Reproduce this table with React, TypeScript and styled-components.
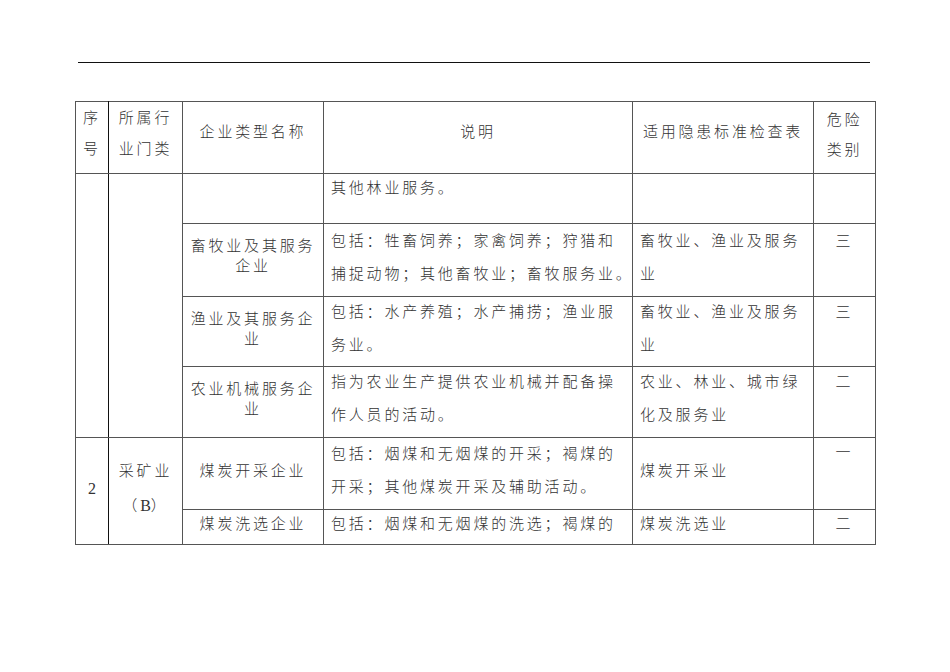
import React from 'react'
import styled, { createGlobalStyle } from 'styled-components'

const GlobalStyle = createGlobalStyle`
  html, body {
    margin: 0;
    padding: 0;
    background: #fff;
  }
  body {
    font-family: "Noto Sans CJK SC", "Noto Sans", sans-serif;
    color: #333;
  }
`

const Page = styled.div`
  width: 950px;
  min-height: 672px;
  padding-top: 62px;
  box-sizing: border-box;
`

const HeaderRule = styled.div`
  margin-left: 78px;
  width: 792px;
  height: 1px;
  background: #111;
`

const Sheet = styled.table`
  margin: 38px 0 0 75px;
  width: 800px;
  border-collapse: collapse;
  table-layout: fixed;
  border: 1px solid #777;
  font-size: 15px;
  font-weight: 300;
  letter-spacing: 2.8px;
`

const Row = styled.tr<{ $h: number }>`
  height: ${(p) => p.$h}px;
`

const Cell = styled.td<{ $pt: number; $left?: boolean; $dark?: boolean }>`
  vertical-align: top;
  padding: ${(p) => p.$pt}px 0 0 ${(p) => (p.$left ? 7 : 0)}px;
  border: 1px solid #555;
  border-right-color: ${(p) => (p.$dark ? '#111' : '#555')};
  overflow: hidden;
`

const Lines = styled.div<{ $gap: number; $left?: boolean }>`
  display: flex;
  flex-direction: column;
  align-items: ${(p) => (p.$left ? 'flex-start' : 'center')};
  gap: ${(p) => p.$gap}px;
`

const Line = styled.div`
  height: 20px;
  line-height: 20px;
  white-space: nowrap;
`

const Latin = styled.span`
  font-family: "Liberation Serif", serif;
  font-size: 16px;
  letter-spacing: 0;
`

type TextCellProps = {
  lines?: React.ReactNode[]
  pt?: number
  gap?: number
  left?: boolean
  dark?: boolean
  rowSpan?: number
}

const TextCell = ({ lines = [], pt = 0, gap = 13, left, dark, rowSpan }: TextCellProps) => (
  <Cell $pt={pt} $left={left} $dark={dark} rowSpan={rowSpan}>
    <Lines $gap={gap} $left={left}>
      {lines.map((line, i) => (
        <Line key={i}>{line}</Line>
      ))}
    </Lines>
  </Cell>
)

export default function App() {
  return (
    <Page>
      <GlobalStyle />
      <HeaderRule />
      <Sheet>
        <colgroup>
          <col style={{ width: 33 }} />
          <col style={{ width: 74 }} />
          <col style={{ width: 141 }} />
          <col style={{ width: 309 }} />
          <col style={{ width: 181 }} />
          <col style={{ width: 62 }} />
        </colgroup>
        <tbody>
          <Row $h={72}>
            <TextCell lines={['序', '号']} pt={5} gap={11} dark />
            <TextCell lines={['所属行', '业门类']} pt={5} gap={11} />
            <TextCell lines={['企业类型名称']} pt={19} />
            <TextCell lines={['说明']} pt={19} />
            <TextCell lines={['适用隐患标准检查表']} pt={19} />
            <TextCell lines={['危险', '类别']} pt={7} gap={10} />
          </Row>

          <Row $h={50}>
            <TextCell rowSpan={4} dark />
            <TextCell rowSpan={4} />
            <TextCell />
            <TextCell lines={['其他林业服务。']} pt={3} left />
            <TextCell />
            <TextCell />
          </Row>

          <Row $h={73}>
            <TextCell lines={['畜牧业及其服务', '企业']} pt={11} gap={0} />
            <TextCell
              lines={['包括：牲畜饲养；家禽饲养；狩猎和', '捕捉动物；其他畜牧业；畜牧服务业。']}
              pt={6}
              left
            />
            <TextCell lines={['畜牧业、渔业及服务', '业']} pt={6} left />
            <TextCell lines={['三']} pt={6} />
          </Row>

          <Row $h={70}>
            <TextCell lines={['渔业及其服务企', '业']} pt={11} gap={0} />
            <TextCell lines={['包括：水产养殖；水产捕捞；渔业服', '务业。']} pt={4} left />
            <TextCell lines={['畜牧业、渔业及服务', '业']} pt={4} left />
            <TextCell lines={['三']} pt={4} />
          </Row>

          <Row $h={71}>
            <TextCell lines={['农业机械服务企', '业']} pt={11} gap={0} />
            <TextCell lines={['指为农业生产提供农业机械并配备操', '作人员的活动。']} pt={4} left />
            <TextCell lines={['农业、林业、城市绿', '化及服务业']} pt={4} left />
            <TextCell lines={['二']} pt={4} />
          </Row>

          <Row $h={72}>
            <TextCell lines={[<Latin key="n">2</Latin>]} pt={40} rowSpan={2} dark />
            <TextCell
              lines={[
                '采矿业',
                <>
                  （<Latin>B</Latin>）
                </>,
              ]}
              pt={22}
              gap={15}
              rowSpan={2}
            />
            <TextCell lines={['煤炭开采企业']} pt={22} />
            <TextCell
              lines={['包括：烟煤和无烟煤的开采；褐煤的', '开采；其他煤炭开采及辅助活动。']}
              pt={5}
              left
            />
            <TextCell lines={['煤炭开采业']} pt={22} left />
            <TextCell lines={['一']} pt={3} />
          </Row>

          <Row $h={35}>
            <TextCell lines={['煤炭洗选企业']} pt={3} />
            <TextCell lines={['包括：烟煤和无烟煤的洗选；褐煤的']} pt={3} left />
            <TextCell lines={['煤炭洗选业']} pt={3} left />
            <TextCell lines={['二']} pt={3} />
          </Row>
        </tbody>
      </Sheet>
    </Page>
  )
}
